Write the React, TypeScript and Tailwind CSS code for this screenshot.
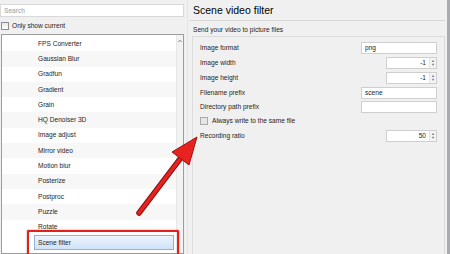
import { ChevronUp } from "lucide-react";

const filters = [
  "FPS Converter",
  "Gaussian Blur",
  "Gradfun",
  "Gradient",
  "Grain",
  "HQ Denoiser 3D",
  "Image adjust",
  "Mirror video",
  "Motion blur",
  "Posterize",
  "Postproc",
  "Puzzle",
  "Rotate",
  "Scene filter",
];

function Spin({ value }: { value: string }) {
  return (
    <div className="flex h-[12px] w-[51px] items-center border border-[#cfcfcf] bg-white">
      <span className="flex-1 pr-[3px] text-right">{value}</span>
      <div className="flex h-full w-[7px] flex-col items-center justify-center border-l border-[#e2e2e2] bg-[#f4f4f4] text-[4px] leading-[4px] text-[#6d7f9b]">
        <span>▲</span>
        <span>▼</span>
      </div>
    </div>
  );
}

function Field({ value }: { value: string }) {
  return (
    <div className="flex h-[12px] w-[76px] items-center border border-[#cfcfcf] bg-white pl-[3px]">
      {value}
    </div>
  );
}

export default function App() {
  return (
    <div className="relative flex h-[254px] w-[450px] overflow-hidden bg-[#f0f0f0] font-['Liberation_Sans',Arial,sans-serif] text-[6.6px] text-[#1e1e1e]">
      {/* left: filter tree */}
      <div className="flex w-[184px] shrink-0 flex-col pt-[4px]">
        <div className="flex h-[13px] items-center border border-[#d9d9d9] bg-white pl-[3px] text-[#9a9a9a]">
          Search
        </div>
        <div className="mt-[4px] flex h-[10px] items-center gap-[3px] pl-[1px]">
          <div className="h-[8px] w-[8px] border border-[#8f8f8f] bg-gradient-to-b from-[#e8e8e8] to-white" />
          <span>Only show current</span>
        </div>
        <div className="mt-[3px] ml-[1px] flex flex-1 border border-[#9c9c9c] bg-white">
          <div className="flex-1 pt-[1px]">
            {filters.map((name, i) => (
              <div
                key={name}
                className={
                  name === "Scene filter"
                    ? "ml-[32px] mr-[2px] flex h-[15.3px] items-center border border-[#8fb3de] bg-gradient-to-b from-[#edf4fc] to-[#cfe3f8] pl-[3px]"
                    : i % 2 === 0
                    ? "flex h-[15.3px] items-center pl-[36px]"
                    : "flex h-[15.3px] items-center bg-[#f7f7f7] pl-[36px]"
                }
              >
                {name}
              </div>
            ))}
          </div>
          <div className="flex w-[7px] flex-col items-center border-l border-[#e6e6e6] bg-[#f3f3f3] pt-[3px]">
            <ChevronUp className="h-[6px] w-[6px] text-[#606060]" strokeWidth={3} />
          </div>
        </div>
      </div>

      {/* splitter */}
      <div className="w-[4px] shrink-0 border-r border-[#e4e4e4]" />

      {/* right: filter settings */}
      <div className="flex flex-1 flex-col">
        <div className="pl-[5px] pt-[4px] text-[10.5px] leading-[13px] text-black">
          Scene video filter
        </div>
        <div className="mx-[2px] mt-[3px] h-px bg-[#d6d6d6]" />
        <div className="pl-[5px] pt-[5px] leading-[8px]">Send your video to picture files</div>
        <div className="mb-[-2px] ml-[4px] mr-[2px] mt-[2px] flex-1 border border-[#dcdcdc] pl-[7px] pr-[7px] pt-[3px]">
          <div className="flex h-[15px] items-center justify-between">
            <span>Image format</span>
            <Field value="png" />
          </div>
          <div className="flex h-[15px] items-center justify-between">
            <span>Image width</span>
            <Spin value="-1" />
          </div>
          <div className="flex h-[15px] items-center justify-between">
            <span>Image height</span>
            <Spin value="-1" />
          </div>
          <div className="flex h-[15px] items-center justify-between">
            <span>Filename prefix</span>
            <Field value="scene" />
          </div>
          <div className="flex h-[14px] items-center justify-between">
            <span>Directory path prefix</span>
            <Field value="" />
          </div>
          <div className="flex h-[14px] items-center gap-[4px]">
            <div className="h-[8px] w-[8px] border border-[#a8a8a8] bg-[#e6e6e6]" />
            <span>Always write to the same file</span>
          </div>
          <div className="flex h-[15px] items-center justify-between">
            <span>Recording ratio</span>
            <Spin value="50" />
          </div>
        </div>
      </div>
      <div className="w-[3px] shrink-0 bg-[#a9abae]" />

      {/* annotation: red highlight + arrow */}
      <div className="absolute left-[27px] top-[230px] h-[30px] w-[152px] rounded-[1px] border-[2.5px] border-[#e3201c] shadow-[0_0_2px_rgba(120,0,0,0.5)]" />
      <svg className="absolute left-0 top-0" width="450" height="254" viewBox="0 0 450 254">
        <line x1="139" y1="213" x2="183" y2="155" stroke="#8a1010" strokeWidth="5.5" strokeLinecap="round" />
        <line x1="139" y1="213" x2="183" y2="155" stroke="#e8231f" strokeWidth="3.5" strokeLinecap="round" />
        <polygon points="197,137 172,152 189,165" fill="#e8231f" stroke="#9a1414" strokeWidth="1" strokeLinejoin="round" />
      </svg>
    </div>
  );
}
